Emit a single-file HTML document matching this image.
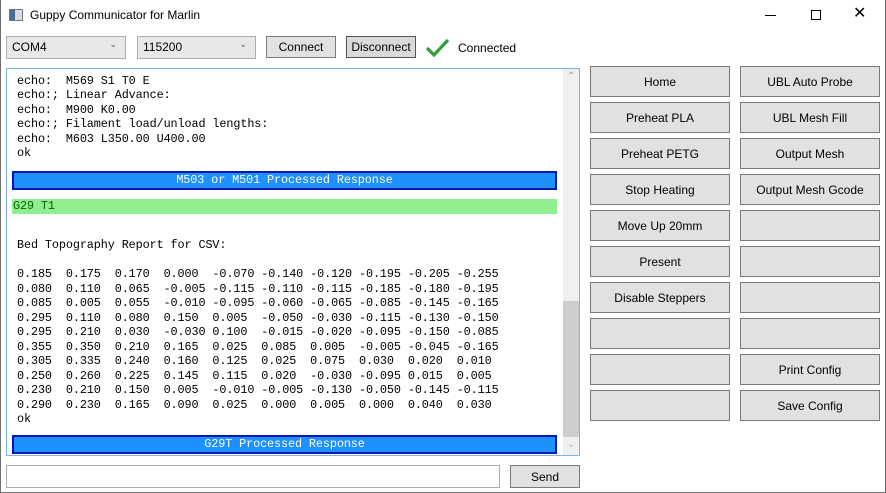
<!DOCTYPE html>
<html><head><meta charset="utf-8"><style>
*{margin:0;padding:0;box-sizing:border-box}
body{width:886px;height:493px;background:#fff;position:relative;overflow:hidden;font-family:"Liberation Sans",sans-serif;font-size:12px;color:#000}
.a{position:absolute}
.btn{position:absolute;background:#e1e1e1;border:1px solid #7a7a7a;display:flex;align-items:center;justify-content:center;font-size:12px;color:#000}
.mono{font-family:"Liberation Mono",monospace;font-size:11.8px;white-space:pre;line-height:14.5px;letter-spacing:-0.1px}
.combo{position:absolute;background:#e8e8e8;border:1px solid #adadad;font-size:12px;padding:3px 0 0 5px}
.combo span{position:absolute;right:8px;top:2px;font-size:9px;color:#555}
</style></head><body>
<div class="a" style="left:0;top:0;width:886px;height:493px;border:1px solid #6f6f6f;border-top:none"></div>
<div class="a" style="left:9px;top:9px;width:14px;height:12px;border:1px solid #777;background:#d8dce4"><div style="width:5px;height:10px;background:#4a6a9a"></div></div>
<div class="a" style="left:30px;top:8px;font-size:12px">Guppy Communicator for Marlin</div>
<div class="a" style="left:765px;top:15px;width:11px;height:1px;background:#000"></div>
<div class="a" style="left:811px;top:10px;width:10px;height:10px;border:1px solid #000"></div>
<div class="a" style="left:853px;top:4px;font-size:16px;line-height:20px">✕</div>

<div class="combo" style="left:6px;top:36px;width:120px;height:23px">COM4<span>&#8964;</span></div>
<div class="combo" style="left:137px;top:36px;width:119px;height:23px">115200<span>&#8964;</span></div>
<div class="btn" style="left:266px;top:36px;width:70px;height:22px">Connect</div>
<div class="btn" style="left:346px;top:36px;width:70px;height:22px;background:#dadada;border-color:#555">Disconnect</div>
<svg class="a" style="left:424px;top:37px" width="28" height="22"><path d="M3 11 L10 18 L24 3" stroke="#2e9e3a" stroke-width="3.2" fill="none"/></svg>
<div class="a" style="left:458px;top:41px">Connected</div>

<div class="a" style="left:6px;top:68px;width:574px;height:388px;border:1px solid #7fb4e6;overflow:hidden">
 <div class="a mono" style="left:10px;top:-10px">echo:  M569 S1 X Y Z
echo:  M569 S1 T0 E
echo:; Linear Advance:
echo:  M900 K0.00
echo:; Filament load/unload lengths:
echo:  M603 L350.00 U400.00
ok</div>
 <div class="a mono" style="left:5px;top:102px;width:545px;height:19px;background:#1e90ff;border:2px solid #0018b0;color:#fff;text-align:center;line-height:15px">M503 or M501 Processed Response</div>
 <div class="a mono" style="left:5px;top:130px;width:545px;height:15px;background:#90ee90;color:#006400;padding-left:1px;line-height:15px">G29 T1</div>
 <div class="a mono" style="left:10px;top:169px">Bed Topography Report for CSV:</div>
 <div class="a mono" style="left:10px;top:198px">0.185  0.175  0.170  0.000  -0.070 -0.140 -0.120 -0.195 -0.205 -0.255
0.080  0.110  0.065  -0.005 -0.115 -0.110 -0.115 -0.185 -0.180 -0.195
0.085  0.005  0.055  -0.010 -0.095 -0.060 -0.065 -0.085 -0.145 -0.165
0.295  0.110  0.080  0.150  0.005  -0.050 -0.030 -0.115 -0.130 -0.150
0.295  0.210  0.030  -0.030 0.100  -0.015 -0.020 -0.095 -0.150 -0.085
0.355  0.350  0.210  0.165  0.025  0.085  0.005  -0.005 -0.045 -0.165
0.305  0.335  0.240  0.160  0.125  0.025  0.075  0.030  0.020  0.010
0.250  0.260  0.225  0.145  0.115  0.020  -0.030 -0.095 0.015  0.005
0.230  0.210  0.150  0.005  -0.010 -0.005 -0.130 -0.050 -0.145 -0.115
0.290  0.230  0.165  0.090  0.025  0.000  0.005  0.000  0.040  0.030
ok</div>
 <div class="a mono" style="left:5px;top:366px;width:545px;height:19px;background:#1e90ff;border:2px solid #0018b0;color:#fff;text-align:center;line-height:15px">G29T Processed Response</div>
 <div class="a" style="left:556px;top:0;width:17px;height:386px;background:#f0f0f0"></div>
 <div class="a" style="left:556px;top:232px;width:17px;height:136px;background:#cdcdcd"></div>
 <div class="a" style="left:560px;top:2px;font-size:10px;color:#999">&#8963;</div>
 <div class="a" style="left:560px;top:370px;font-size:10px;color:#bbb">&#8964;</div>
</div>

<div class="a" style="left:6px;top:465px;width:494px;height:23px;border:1px solid #adadad"></div>
<div class="btn" style="left:510px;top:465px;width:70px;height:23px">Send</div>

<div class="btn" style="left:590px;top:66px;width:140px;height:31px">Home</div>
<div class="btn" style="left:590px;top:102px;width:140px;height:31px">Preheat PLA</div>
<div class="btn" style="left:590px;top:138px;width:140px;height:31px">Preheat PETG</div>
<div class="btn" style="left:590px;top:174px;width:140px;height:31px">Stop Heating</div>
<div class="btn" style="left:590px;top:210px;width:140px;height:31px">Move Up 20mm</div>
<div class="btn" style="left:590px;top:246px;width:140px;height:31px">Present</div>
<div class="btn" style="left:590px;top:282px;width:140px;height:31px">Disable Steppers</div>
<div class="btn" style="left:590px;top:318px;width:140px;height:31px"></div>
<div class="btn" style="left:590px;top:354px;width:140px;height:31px"></div>
<div class="btn" style="left:590px;top:390px;width:140px;height:31px"></div>
<div class="btn" style="left:740px;top:66px;width:140px;height:31px">UBL Auto Probe</div>
<div class="btn" style="left:740px;top:102px;width:140px;height:31px">UBL Mesh Fill</div>
<div class="btn" style="left:740px;top:138px;width:140px;height:31px">Output Mesh</div>
<div class="btn" style="left:740px;top:174px;width:140px;height:31px">Output Mesh Gcode</div>
<div class="btn" style="left:740px;top:210px;width:140px;height:31px"></div>
<div class="btn" style="left:740px;top:246px;width:140px;height:31px"></div>
<div class="btn" style="left:740px;top:282px;width:140px;height:31px"></div>
<div class="btn" style="left:740px;top:318px;width:140px;height:31px"></div>
<div class="btn" style="left:740px;top:354px;width:140px;height:31px">Print Config</div>
<div class="btn" style="left:740px;top:390px;width:140px;height:31px">Save Config</div>
</body></html>
